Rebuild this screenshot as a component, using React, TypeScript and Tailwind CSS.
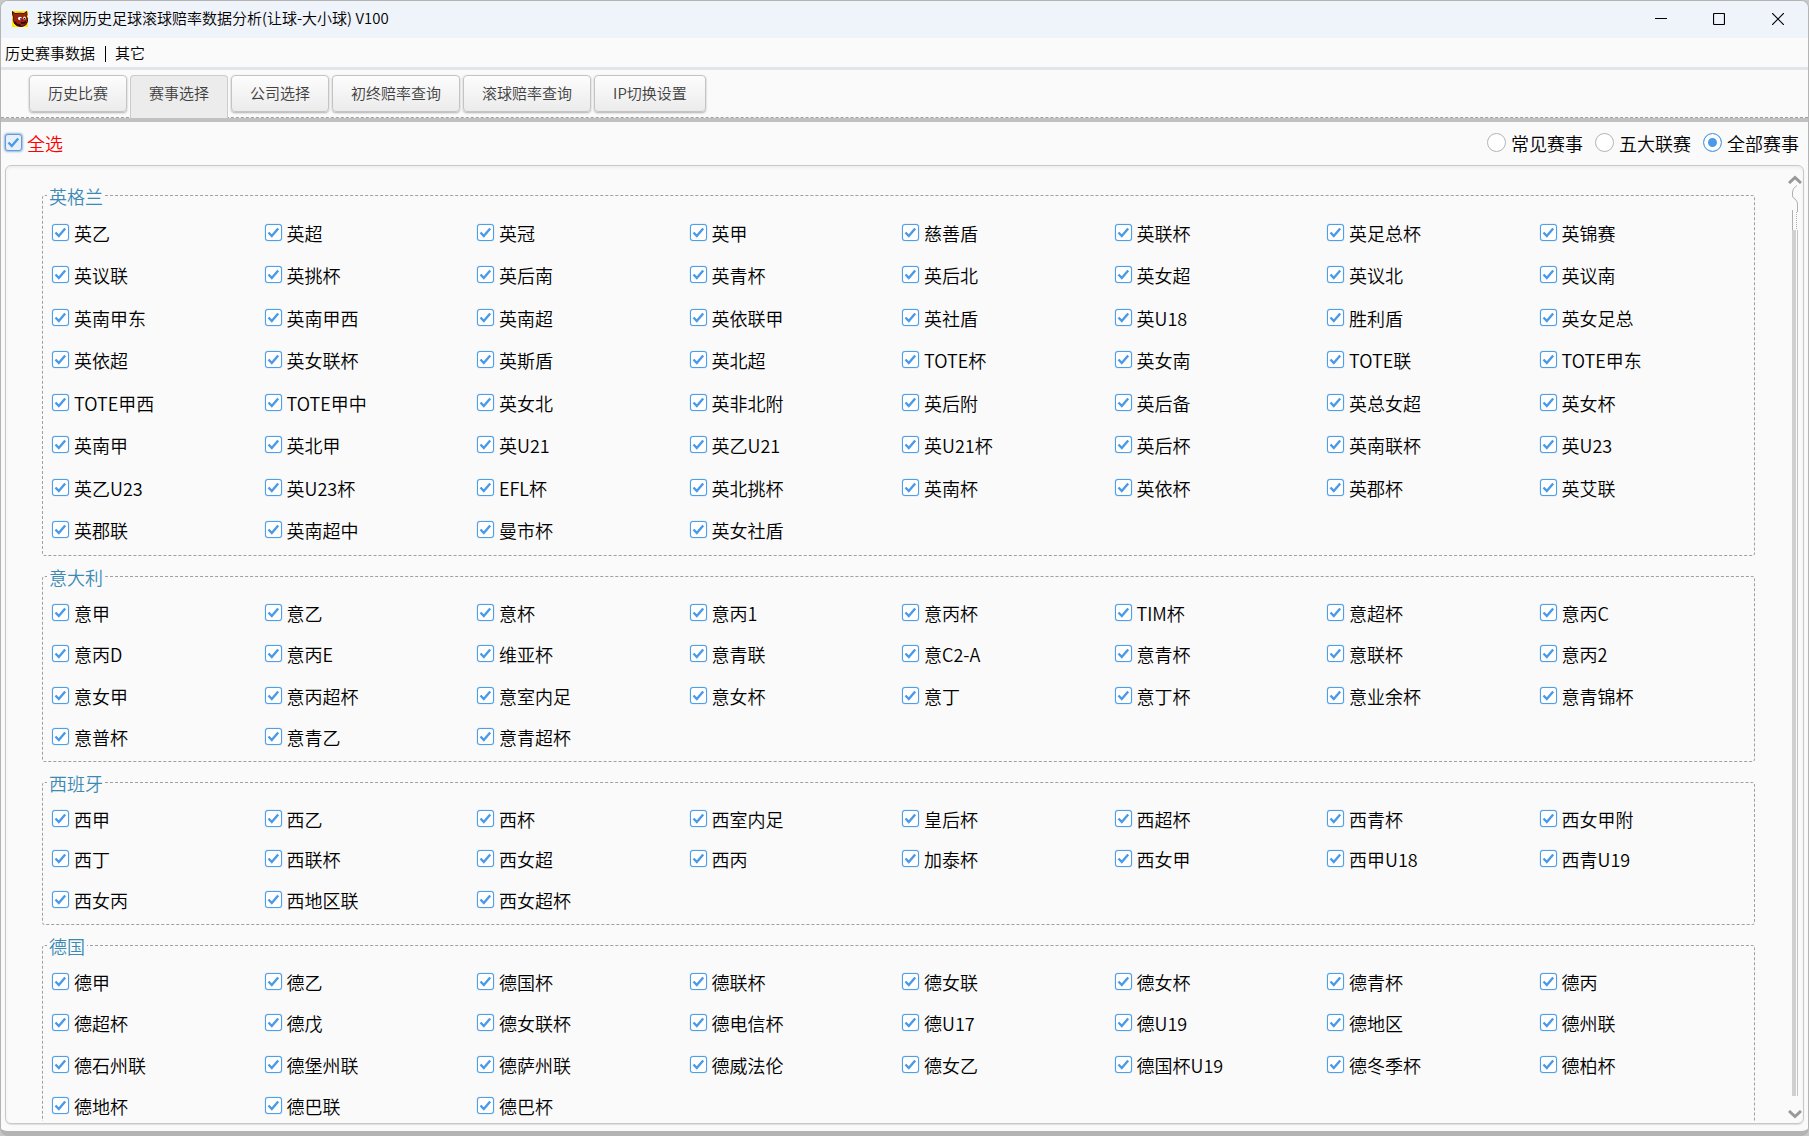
import { useState } from "react";
import clsx from "clsx";

interface LeagueGroup {
  name: string;
  listClass: string;
  leagues: string[];
}

const MENU_ITEMS = ["历史赛事数据", "其它"];

const TABS = [
  "历史比赛",
  "赛事选择",
  "公司选择",
  "初终赔率查询",
  "滚球赔率查询",
  "IP切换设置",
];

const FILTERS = ["常见赛事", "五大联赛", "全部赛事"];

const GROUPS: LeagueGroup[] = [
  {
    name: "英格兰",
    listClass: "min-h-[340px]",
    leagues: [
      "英乙", "英超", "英冠", "英甲", "慈善盾", "英联杯", "英足总杯", "英锦赛",
      "英议联", "英挑杯", "英后南", "英青杯", "英后北", "英女超", "英议北", "英议南",
      "英南甲东", "英南甲西", "英南超", "英依联甲", "英社盾", "英U18", "胜利盾", "英女足总",
      "英依超", "英女联杯", "英斯盾", "英北超", "TOTE杯", "英女南", "TOTE联", "TOTE甲东",
      "TOTE甲西", "TOTE甲中", "英女北", "英非北附", "英后附", "英后备", "英总女超", "英女杯",
      "英南甲", "英北甲", "英U21", "英乙U21", "英U21杯", "英后杯", "英南联杯", "英U23",
      "英乙U23", "英U23杯", "EFL杯", "英北挑杯", "英南杯", "英依杯", "英郡杯", "英艾联",
      "英郡联", "英南超中", "曼市杯", "英女社盾",
    ],
  },
  {
    name: "意大利",
    listClass: "min-h-[165px]",
    leagues: [
      "意甲", "意乙", "意杯", "意丙1", "意丙杯", "TIM杯", "意超杯", "意丙C",
      "意丙D", "意丙E", "维亚杯", "意青联", "意C2-A", "意青杯", "意联杯", "意丙2",
      "意女甲", "意丙超杯", "意室内足", "意女杯", "意丁", "意丁杯", "意业余杯", "意青锦杯",
      "意普杯", "意青乙", "意青超杯",
    ],
  },
  {
    name: "西班牙",
    listClass: "min-h-[122px]",
    leagues: [
      "西甲", "西乙", "西杯", "西室内足", "皇后杯", "西超杯", "西青杯", "西女甲附",
      "西丁", "西联杯", "西女超", "西丙", "加泰杯", "西女甲", "西甲U18", "西青U19",
      "西女丙", "西地区联", "西女超杯",
    ],
  },
  {
    name: "德国",
    listClass: "min-h-[165px]",
    leagues: [
      "德甲", "德乙", "德国杯", "德联杯", "德女联", "德女杯", "德青杯", "德丙",
      "德超杯", "德戊", "德女联杯", "德电信杯", "德U17", "德U19", "德地区", "德州联",
      "德石州联", "德堡州联", "德萨州联", "德威法伦", "德女乙", "德国杯U19", "德冬季杯", "德柏杯",
      "德地杯", "德巴联", "德巴杯",
    ],
  },
];

const ALL_LEAGUES = GROUPS.flatMap((g) => g.leagues);

function AppIcon() {
  return (
    <svg width="16" height="16" viewBox="0 0 16 16" aria-hidden="true">
      <rect width="16" height="16" fill="#f8ee00" />
      <path
        d="M.5 .5 3 2.500Q7.500 2 12 2.500L14.500 .5Q15.500 3 14.500 5.500Q16 7.500 15.500 10.500Q14.500 15 10 15.500Q4.500 15.500 2.500 12.500Q.5 9 1.500 6Q0 3 .5 .5Z"
        fill="#9c2114"
        stroke="#4a0d07"
        strokeWidth="1"
      />
      <path d="M2.500 11Q5 15 9 14.500" fill="none" stroke="#3a0805" strokeWidth="2" />
      <path d="M9 11.500Q12 13 14 10.500" fill="none" stroke="#2a0503" strokeWidth="1.500" />
      <ellipse cx="8" cy="7.500" rx="2" ry="1.800" fill="#fff" />
      <ellipse cx="12.500" cy="7" rx="1.300" ry="1.600" fill="#fff" />
      <circle cx="9" cy="8" r="0.900" fill="#111" />
      <circle cx="12.500" cy="7.500" r="0.700" fill="#111" />
    </svg>
  );
}

function TitleBar() {
  return (
    <header className="flex h-[37px] shrink-0 items-center bg-[#eff3fa] pb-[2px] pl-[11px] text-[15px]">
      <AppIcon />
      <h1 className="ml-[9px]">球探网历史足球滚球赔率数据分析(让球-大小球) V100</h1>
      <div className="ml-auto flex h-full">
        <button type="button" aria-label="最小化" className="grid w-[58px] place-items-center">
          <svg width="12" height="12" viewBox="0 0 12 12" stroke="#000" fill="none">
            <path d="M0 5.500H12" />
          </svg>
        </button>
        <button type="button" aria-label="最大化" className="grid w-[58px] place-items-center">
          <svg width="12" height="12" viewBox="0 0 12 12" stroke="#000" fill="none">
            <rect x="0.500" y="0.500" width="11" height="11" rx="1" strokeWidth="1.200" />
          </svg>
        </button>
        <button type="button" aria-label="关闭" className="grid w-[60px] place-items-center">
          <svg width="12" height="12" viewBox="0 0 12 12" stroke="#000" fill="none">
            <path d="M0 0 12 12M12 0 0 12" strokeWidth="1.200" />
          </svg>
        </button>
      </div>
    </header>
  );
}

function MenuBar() {
  return (
    <nav className="flex h-8 shrink-0 items-center gap-[10px] border-b-3 border-[#e1e6ea] pt-[2px] pl-1 text-[15px]">
      {MENU_ITEMS.map((item, i) => (
        <div key={item} className="flex items-center gap-[9px]">
          {i > 0 && <span className="h-4 w-px bg-black" />}
          <button type="button">{item}</button>
        </div>
      ))}
    </nav>
  );
}

function TabBar({ active, onSelect }: { active: string; onSelect: (tab: string) => void }) {
  return (
    <div className="shrink-0 border-b-4 border-[#c1c1c1]">
      <div
        role="tablist"
        className="flex h-12 items-start gap-[3px] border-b border-dashed border-[#a0a0a0] pt-[5px] pl-7 text-[15px] text-[#404040]"
      >
        {TABS.map((tab) => (
          <button
            key={tab}
            type="button"
            role="tab"
            aria-selected={tab === active}
            onClick={() => onSelect(tab)}
            className={clsx(
              "border px-[18px]",
              tab === active
                ? "-mb-px h-[43px] rounded-t-sm border-b-0 border-[#cccccc] bg-[#ececec] pb-2"
                : "h-[37px] rounded-sm border-[#c4c4c4] bg-linear-to-b from-[#fdfdfd] to-[#ebebeb] shadow-[0_1px_2px_rgba(0,0,0,0.3)]",
            )}
          >
            {tab}
          </button>
        ))}
      </div>
    </div>
  );
}

function CheckBox({
  label,
  checked,
  onChange,
  prominent = false,
}: {
  label: string;
  checked: boolean;
  onChange: () => void;
  prominent?: boolean;
}) {
  return (
    <label className={clsx("flex items-center gap-[5px]", prominent && "text-[#ff0000]")}>
      <span className="grid size-[17px] shrink-0 place-items-center">
        <input
          type="checkbox"
          checked={checked}
          onChange={onChange}
          className={clsx(
            "peer col-start-1 row-start-1 size-[17px] appearance-none rounded-[3px] border",
            prominent
              ? "border-[#6b9bd0] bg-[#e8f1fb] shadow-[0_0_2px_1px_#8fb9e6]"
              : "border-[#4f9fe8] bg-white shadow-[0_0_1px_#4f9fe8]",
          )}
        />
        <svg
          viewBox="0 0 17 17"
          className="pointer-events-none col-start-1 row-start-1 hidden size-[17px] peer-checked:block"
          fill="none"
          stroke="#4a9ae8"
          strokeWidth="2.400"
        >
          <path d="M3.500 8.500 6.800 12 13.200 4.500" />
        </svg>
      </span>
      <span className="pt-px">{label}</span>
    </label>
  );
}

function ScrollRail() {
  return (
    <div className="flex w-4 shrink-0 flex-col items-center pt-[9px] pb-[2px]" aria-hidden="true">
      <svg width="14" height="9" viewBox="0 0 14 9" fill="none" stroke="#999" strokeWidth="3">
        <path d="M1 8 7 2.500 13 8" />
      </svg>
      <svg width="6" height="46" viewBox="0 0 6 46" fill="none" stroke="#b0b0b0">
        <path d="M5 1.500Q.5 4 .5 8V12Q.5 14 3 15Q5.500 17 5.500 20V28" />
        <path d="M.5 26V46" />
        <path d="M4.500 28V46" strokeDasharray="1 1" />
      </svg>
      <div className="flex w-[6px] flex-1 gap-px">
        <span className="w-1 bg-[#d0d0d0]" />
        <span className="w-px bg-[#c4c4c4]" />
      </div>
      <svg className="mt-[14px]" width="14" height="9" viewBox="0 0 14 9" fill="none" stroke="#999" strokeWidth="3">
        <path d="M1 1 7 6.500 13 1" />
      </svg>
    </div>
  );
}

export default function App() {
  const [tab, setTab] = useState("赛事选择");
  const [filter, setFilter] = useState("全部赛事");
  const [selected, setSelected] = useState<Set<string>>(new Set(ALL_LEAGUES));

  const allSelected = selected.size === ALL_LEAGUES.length;

  const toggleAll = () => {
    setSelected(allSelected ? new Set() : new Set(ALL_LEAGUES));
  };

  const toggleLeague = (league: string) => {
    const next = new Set(selected);
    if (!next.delete(league)) next.add(league);
    setSelected(next);
  };

  return (
    <div className="h-screen bg-[#c8c8c8] font-['Noto_Sans_CJK_SC',sans-serif] font-[350] text-black">
      <div className="flex h-full flex-col overflow-hidden rounded-lg border border-b-5 border-[#b4b4b4] bg-[#fafafa]">
        <TitleBar />
        <MenuBar />
        <TabBar active={tab} onSelect={setTab} />

        <div className="flex h-[43px] shrink-0 items-center justify-between pr-[9px] pb-[2px] pl-1 text-[18px] leading-6">
          <CheckBox label="全选" checked={allSelected} onChange={toggleAll} prominent />
          <div className="flex gap-3">
            {FILTERS.map((name) => (
              <label key={name} className="flex items-center gap-[5px]">
                <input
                  type="radio"
                  name="filter"
                  checked={filter === name}
                  onChange={() => setFilter(name)}
                  className="size-[19px] appearance-none rounded-full border border-[#b4b4b4] bg-white checked:border-[#4f9fe8] checked:bg-[#4a9ae8] checked:shadow-[inset_0_0_0_4px_#fff]"
                />
                <span className="pt-px">{name}</span>
              </label>
            ))}
          </div>
        </div>

        <main className="mx-1 mb-[7px] flex min-h-0 flex-1 rounded-md border border-[#c8c8c8] pb-[2px] shadow-[inset_0_2px_3px_#eee,0_1px_1px_#ddd]">
          <div className="flex flex-1 flex-col gap-[7px] overflow-y-auto pt-4 pr-[32px] pl-[36px] text-[18px] leading-6 [scrollbar-width:none]">
            {GROUPS.map((group) => (
              <fieldset
                key={group.name}
                className="rounded-[3px] border border-dashed border-[#a0a0a0] pt-[3px] pr-[2px] pb-1 pl-[9px]"
              >
                <legend className="-ml-[5px] px-[2px] pt-[2px] text-[#3a8ab4]">{group.name}</legend>
                <div className={clsx("grid auto-rows-fr grid-cols-8", group.listClass)}>
                  {group.leagues.map((league) => (
                    <CheckBox
                      key={league}
                      label={league}
                      checked={selected.has(league)}
                      onChange={() => toggleLeague(league)}
                    />
                  ))}
                </div>
              </fieldset>
            ))}
          </div>
          <ScrollRail />
        </main>
      </div>
    </div>
  );
}
